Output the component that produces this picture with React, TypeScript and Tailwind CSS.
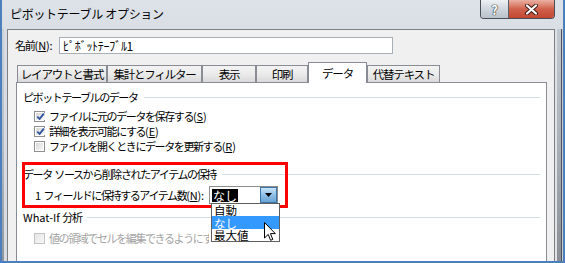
import React from 'react';

const FONT = "font-['Noto_Sans_CJK_JP','Noto_Sans',sans-serif]";

// Japanese runs are squeezed (Meiryo UI is narrow), ASCII runs keep normal spacing
function J({ text }: { text: string }) {
  const parts = text.match(/[\x00-\x7f]+|[^\x00-\x7f]+/g) ?? [];
  return (
    <>
      {parts.map((p, i) =>
        /^[\x00-\x7f]/.test(p) ? (
          <span key={i} className="tracking-normal">
            {p}
          </span>
        ) : (
          <span key={i}>{p}</span>
        )
      )}
    </>
  );
}

// label like "詳細を表示可能にする(E)" -> underline the access key
function Label({ text, keyChar }: { text: string; keyChar?: string }) {
  if (!keyChar) return <J text={text} />;
  const idx = text.lastIndexOf(`(${keyChar})`);
  return (
    <>
      <J text={text.slice(0, idx)} />
      <span className="tracking-[-0.2px]">
        (<span className="underline underline-offset-1">{keyChar}</span>)
      </span>
      <J text={text.slice(idx + 3)} />
    </>
  );
}

function Check({ checked = false, disabled = false }: { checked?: boolean; disabled?: boolean }) {
  if (disabled) {
    return (
      <span className="w-[11px] h-[11px] border border-[#c4c4c4] bg-linear-to-br from-[#e6e6e6] to-[#f7f7f7] shrink-0" />
    );
  }
  return (
    <span className="w-[11px] h-[11px] border border-[#8e8f8f] bg-white p-px shrink-0 flex">
      <span className="flex-1 bg-linear-to-br from-[#d6d6d6] to-[#f9f9f9] flex items-center justify-center">
        {checked && (
          <svg width="9" height="9" viewBox="0 0 9 9">
            <path d="M1.3 4.6 L3.6 7 L7.8 1.6" fill="none" stroke="#2c4f9e" strokeWidth="1.8" />
          </svg>
        )}
      </span>
    </span>
  );
}

function SectionHeader({ label }: { label: string }) {
  return (
    <div className="flex items-center h-[14px] pl-[6px] pr-[6px] gap-[6px]">
      <span className="text-[11px] leading-[14px] tracking-[-1.4px] text-black whitespace-nowrap">
        <J text={label} />
      </span>
      <span className="flex-1 h-px bg-[#d3dde4]" />
    </div>
  );
}

function CheckRow({
  label,
  keyChar,
  checked,
  disabled,
}: {
  label: string;
  keyChar?: string;
  checked?: boolean;
  disabled?: boolean;
}) {
  return (
    <div className="flex items-center h-[15px] pl-[17px] gap-[4px]">
      <Check checked={checked} disabled={disabled} />
      <span
        className={`block text-[11px] leading-[15px] tracking-[-1.4px] whitespace-nowrap ${
          disabled ? 'text-[#a3a3a3] w-[160px] overflow-hidden' : 'text-black'
        }`}
      >
        <Label text={label} keyChar={keyChar} />
      </span>
    </div>
  );
}

const tabs = [
  { label: 'レイアウトと書式', w: 'w-[90px]' },
  { label: '集計とフィルター', w: 'w-[95px]' },
  { label: '表示', w: 'w-[54px]' },
  { label: '印刷', w: 'w-[52px]' },
  { label: 'データ', w: 'w-[59px]', active: true },
  { label: '代替テキスト', w: 'w-[73px]' },
];

export default function App() {
  return (
    <div
      className={`${FONT} relative w-[565px] h-[263px] overflow-hidden flex flex-col border-x-2 border-b-2 border-[#4d7ebd] bg-linear-to-b from-[#dde2e8] via-[#ced4db] to-[#c8cfd7]`}
    >
      {/* title bar */}
      <div className="h-[29px] flex items-start shrink-0">
        <span className="pl-[8px] pt-[6px] text-[12px] leading-[16px] tracking-[-0.3px] text-black">
          ピボットテーブル オプション
        </span>
        <div className="ml-auto mr-[8px] flex h-[19px] rounded-b-[4px] border border-t-0 border-[#4a4f57] overflow-hidden">
          <div className="w-[28px] h-full flex items-center justify-center bg-linear-to-b from-[#eef1f4] via-[#d0d6dd] to-[#b9c1ca] border-r border-[#5b6068]">
            <span className="text-[13px] font-bold leading-none text-white [text-shadow:0_0_1px_#333,0_0_1px_#333,0_0_1px_#333]">?</span>
          </div>
          <div className="w-[45px] h-full flex items-center justify-center bg-linear-to-b from-[#eab1a3] via-[#d0614c] to-[#c34630]">
            <svg width="13" height="11" viewBox="0 0 13 11">
              <path d="M2 1.5 L11 9.5 M11 1.5 L2 9.5" stroke="#3a1a14" strokeWidth="4" strokeLinecap="round" />
              <path d="M2 1.5 L11 9.5 M11 1.5 L2 9.5" stroke="#ffffff" strokeWidth="2.2" strokeLinecap="round" />
            </svg>
          </div>
        </div>
      </div>

      {/* body */}
      <div className="flex flex-1 min-h-0">
        <div className="w-[5px] flex">
          <span className="w-[2px] bg-linear-to-b from-[#c9d1da] via-[#b3bbc4] to-[#8e959d]" />
          <span className="flex-1 bg-[#d6dce2]" />
        </div>

        <div className="flex-1 flex flex-col border-l border-t border-r border-[#7d7f83] bg-[#f0f0f0] pt-[7px]">
          {/* name row */}
          <div className="flex items-center h-[17px] pl-[7px]">
            <span className="w-[44px] text-[11px] leading-[15px] tracking-[-1.2px] text-black whitespace-nowrap">
              <Label text="名前(N):" keyChar="N" />
            </span>
            <div className="w-[334px] h-[17px] border border-[#a9afb7] bg-white flex items-center pl-[3px]">
              <span className="text-[12px] leading-[15px] tracking-[-0.3px] text-black">ﾋﾟﾎﾞｯﾄﾃｰﾌﾞﾙ1</span>
            </div>
          </div>

          {/* tabs */}
          <div className="flex items-end h-[20px] mt-[8px] pl-[9px]">
            {tabs.map((t) =>
              t.active ? (
                <div
                  key={t.label}
                  className={`${t.w} h-[21px] -mb-px relative z-10 bg-white border border-b-0 border-[#898c95] flex items-center justify-center`}
                >
                  <span className="text-[11.5px] leading-[14px] tracking-[-1.2px] text-black">{t.label}</span>
                </div>
              ) : (
                <div
                  key={t.label}
                  className={`${t.w} h-[17px] border border-b-0 border-[#898c95] bg-linear-to-b from-[#f3f3f3] via-[#ebebeb] to-[#d9d9d9] flex items-center justify-center`}
                >
                  <span className="text-[11.5px] leading-[14px] tracking-[-1.2px] text-black whitespace-nowrap">{t.label}</span>
                </div>
              )
            )}
          </div>

          {/* tab panel */}
          <div className="flex-1 ml-[8px] mr-[7px] border-l border-t border-r border-[#898c95] bg-white pt-[7px] flex flex-col">
            <SectionHeader label="ピボットテーブルのデータ" />
            <div className="mt-[5px]">
              <CheckRow label="ファイルに元のデータを保存する(S)" keyChar="S" checked />
              <CheckRow label="詳細を表示可能にする(E)" keyChar="E" checked />
              <CheckRow label="ファイルを開くときにデータを更新する(R)" keyChar="R" />
            </div>

            <div className="mt-[13px]">
              <SectionHeader label="データ ソースから削除されたアイテムの保持" />
            </div>
            <div className="flex items-center h-[18px] mt-[5px] pl-[18px]">
              <span className="w-[174px] text-[11px] leading-[15px] tracking-[-1.4px] text-black whitespace-nowrap">
                <Label text="1 フィールドに保持するアイテム数(N):" keyChar="N" />
              </span>
              <div className="w-[69px] h-[18px] border border-[#8d8d8d] bg-white flex items-center">
                <span className="ml-[2px] bg-black text-white text-[12px] leading-[13px] px-px">なし</span>
                <div className="ml-auto w-[17px] h-full border border-[#3d74a8] bg-linear-to-b from-[#c9e4f8] via-[#8ebfe6] to-[#6aa3d6] flex items-center justify-center">
                  <svg width="7" height="4" viewBox="0 0 7 4">
                    <path d="M0 0 H7 L3.5 4 Z" fill="#000" />
                  </svg>
                </div>
              </div>
            </div>

            <div className="mt-[6px]">
              <SectionHeader label="What-If 分析" />
            </div>
            <div className="mt-[7px]">
              <CheckRow label="値の領域でセルを編集できるようにする" disabled />
            </div>
          </div>
        </div>

        <div className="w-[8px] flex">
          <span className="w-[2px] bg-[#dfe3e8]" />
          <span className="w-[4px] bg-linear-to-b from-[#c2c9d1] via-[#a9b0b8] to-[#8a8f95]" />
          <span className="w-px bg-[#4e5358]" />
          <span className="w-px bg-[#c5ccd4]" />
        </div>
      </div>

      {/* red annotation frame */}
      <div className="absolute left-[20px] top-[162px] w-[266px] h-[46px] border-[3px] border-[#ff0000] pointer-events-none" />

      {/* open dropdown list */}
      <div className="absolute left-[209px] top-[203px] w-[69px] h-[39px] border border-[#5f5f5f] bg-white flex flex-col text-[11.5px] leading-[12px] text-black">
        <div className="h-[12px] pl-[2px] flex items-center">自動</div>
        <div className="h-[13px] pl-[2px] bg-[#3399ff] text-white flex items-center">なし</div>
        <div className="h-[12px] pl-[2px] flex items-center">最大値</div>
      </div>

      {/* mouse cursor */}
      <svg className="absolute left-[262px] top-[222px]" width="12" height="20" viewBox="0 0 12 20">
        <path
          d="M0.5 0.5 L0.5 16 L4.2 12.4 L6.6 18.3 L8.8 17.4 L6.4 11.6 L11.3 11.6 Z"
          fill="#fff"
          stroke="#000"
          strokeWidth="1"
          strokeLinejoin="miter"
        />
      </svg>
    </div>
  );
}
